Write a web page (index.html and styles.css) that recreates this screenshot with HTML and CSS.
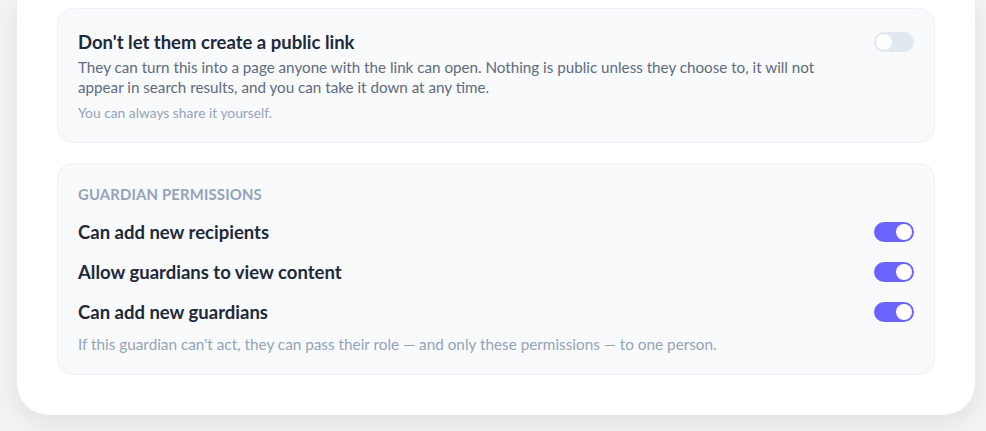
FILE: index.html
```html
<!DOCTYPE html>
<html lang="en">

<head>
  <meta charset="UTF-8">
  <meta name="viewport" content="width=device-width, initial-scale=1.0">
  <title>Sharing settings</title>
  <link rel="stylesheet" href="styles.css">
</head>

<body>
  <div class="sheet">
    <!-- public link -->
    <div class="panel">
      <div class="setting">
        <div class="setting-text">
          <div class="setting-title">Don't let them create a public link</div>
          <div class="setting-desc">They can turn this into a page anyone with the link can open. Nothing is public unless they choose to, it will not appear in search results, and you can take it down at any time.</div>
          <div class="setting-note">You can always share it yourself.</div>
        </div>
        <span class="toggle"></span>
      </div>
    </div>

    <!-- guardian permissions -->
    <div class="panel">
      <div class="panel-label">Guardian permissions</div>
      <div class="perm">
        <span class="perm-name">Can add new recipients</span>
        <span class="toggle on"></span>
      </div>
      <div class="perm">
        <span class="perm-name">Allow guardians to view content</span>
        <span class="toggle on"></span>
      </div>
      <div class="perm">
        <span class="perm-name">Can add new guardians</span>
        <span class="toggle on"></span>
      </div>
      <div class="panel-foot">If this guardian can't act, they can pass their role — and only these permissions — to one person.</div>
    </div>
  </div>
</body>

</html>
```

FILE: styles.css
```css
* {
  box-sizing: border-box;
}

body {
  margin: 0;
  padding: 0 11px 16px 17px;
  background-color: #f3f3f4;
  font-family: Lato, 'Noto Sans', Arial, sans-serif;
  color: #1e293b;
}

.sheet {
  background-color: #fff;
  border-radius: 0 0 32px 32px;
  padding: 8px 40px 40px;
  box-shadow: 0 8px 24px rgba(15, 23, 42, 0.08);
  display: flex;
  flex-direction: column;
  gap: 20px;
}

.panel {
  background-color: #f8fafc;
  border: 1px solid #eef1f5;
  border-radius: 16px;
  padding: 22px 20px 20px;
}

.setting {
  display: flex;
  justify-content: space-between;
  align-items: flex-start;
  gap: 40px;
}

.setting-text {
  max-width: 760px;
}

.setting-title {
  font-size: 18.5px;
  font-weight: 700;
  line-height: 22px;
}

.setting-desc {
  margin-top: 4px;
  font-size: 15.2px;
  line-height: 20px;
  color: #5f6b7e;
}

.setting-note {
  margin-top: 7px;
  font-size: 13.8px;
  line-height: 18px;
  color: #94a3b8;
}

.panel-label {
  font-size: 14.8px;
  font-weight: 700;
  line-height: 16px;
  color: #94a3b8;
  text-transform: uppercase;
  letter-spacing: 0.2px;
  margin-bottom: 10px;
}

.perm {
  display: flex;
  justify-content: space-between;
  align-items: center;
  height: 40px;
}

.perm-name {
  font-size: 18.5px;
  font-weight: 700;
}

.panel-foot {
  margin-top: 2px;
  font-size: 15.3px;
  line-height: 20px;
  color: #94a3b8;
}

.toggle {
  position: relative;
  flex: none;
  width: 40px;
  height: 20px;
  border-radius: 10px;
  background-color: #e2e8f0;
}

.setting .toggle {
  margin-top: 1px;
}

.toggle:after {
  content: "";
  position: absolute;
  top: 2px;
  left: 2px;
  width: 16px;
  height: 16px;
  border-radius: 50%;
  background-color: #fff;
}

.toggle.on {
  background-color: #6c63ff;
}

.toggle.on:after {
  left: 22px;
}
```
